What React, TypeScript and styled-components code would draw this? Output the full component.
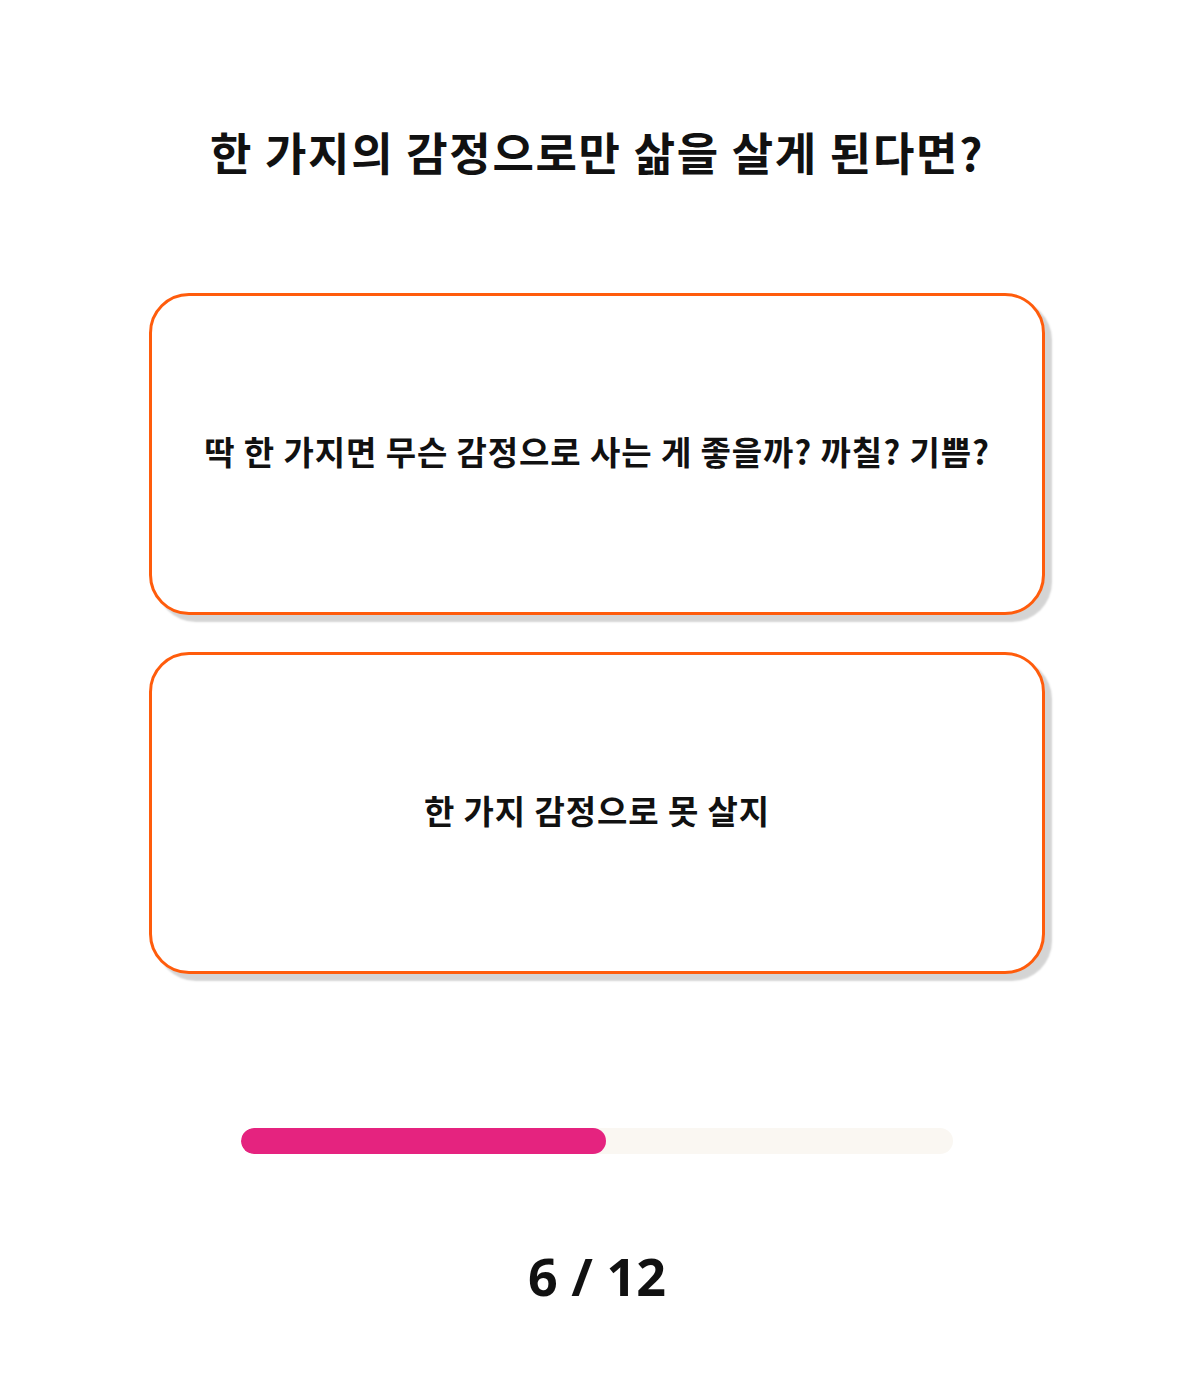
import React from "react";
import styled, { createGlobalStyle } from "styled-components";

const GlobalStyle = createGlobalStyle`
  html, body {
    margin: 0;
    padding: 0;
    background: #ffffff;
  }
  body {
    font-family: "Noto Sans CJK KR", "Noto Sans", sans-serif;
    color: #111111;
  }
`;

const Page = styled.main`
  width: 1200px;
  min-height: 1399px;
  box-sizing: border-box;
  padding: 122px 6px 0 0;
  display: flex;
  flex-direction: column;
  align-items: center;
`;

const Question = styled.h1`
  margin: 0;
  font-family: "Noto Sans CJK KR", sans-serif;
  font-weight: 700;
  font-size: 45px;
  line-height: 60px;
  letter-spacing: 1.7px;
  text-align: center;
`;

const Options = styled.div`
  margin-top: 111px;
  display: flex;
  flex-direction: column;
  gap: 37px;
`;

const Option = styled.button`
  width: 896px;
  height: 322px;
  box-sizing: border-box;
  border: 3px solid #ff5c0c;
  border-radius: 40px;
  background: #ffffff;
  box-shadow: 7px 7px 2px rgba(0, 0, 0, 0.17);
  display: flex;
  align-items: center;
  justify-content: center;
  padding: 0 20px 5px;
  cursor: pointer;
  font-family: "Noto Sans CJK KR", sans-serif;
  font-weight: 700;
  font-size: 33px;
  line-height: 1.3;
  letter-spacing: 0.9px;
  color: #111111;
`;

const Progress = styled.div`
  margin-top: 154px;
  width: 712px;
  height: 26px;
  border-radius: 13px;
  background: #faf7f2;
  overflow: hidden;
`;

const Fill = styled.div`
  height: 100%;
  border-radius: 13px;
  background: #e5237f;
`;

const Counter = styled.div`
  margin-top: 87px;
  font-family: "Noto Sans", "Open Sans", sans-serif;
  font-weight: 700;
  font-size: 52px;
  line-height: 70px;
  color: #111111;
`;

const question = {
  title: "한 가지의 감정으로만 삶을 살게 된다면?",
  answers: [
    "딱 한 가지면 무슨 감정으로 사는 게 좋을까? 까칠? 기쁨?",
    "한 가지 감정으로 못 살지",
  ],
};

const current = 6;
const total = 12;

export default function App() {
  const pct = (current / total) * 100;
  return (
    <>
      <GlobalStyle />
      <Page>
        <Question>{question.title}</Question>
        <Options>
          {question.answers.map((a) => (
            <Option key={a} type="button">
              {a}
            </Option>
          ))}
        </Options>
        <Progress>
          <Fill style={{ width: `calc(${pct}% + 9px)` }} />
        </Progress>
        <Counter>
          {current} / {total}
        </Counter>
      </Page>
    </>
  );
}
